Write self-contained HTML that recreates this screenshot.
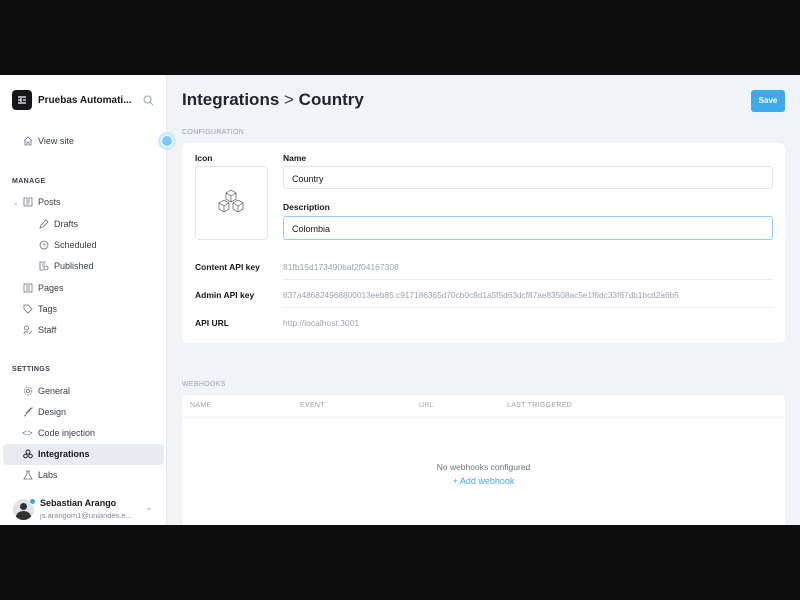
<!DOCTYPE html>
<html><head><style>
*{margin:0;padding:0;box-sizing:border-box}
body{width:800px;height:600px;background:#0c0c0c;font-family:"Liberation Sans",sans-serif;position:relative;overflow:hidden}
#app{position:absolute;left:0;top:75px;width:800px;height:450px;background:#f1f3f6;overflow:hidden}
.abs{position:absolute}
#side{position:absolute;left:0;top:0;width:167px;height:450px;background:#fff;border-right:1px solid #e5e8ec}
.nav{position:absolute;font-size:9px;color:#394047;white-space:nowrap}
.ic{position:absolute;width:10px;height:10px}
.sec{position:absolute;left:12px;font-size:7px;font-weight:bold;color:#394047;letter-spacing:.4px}
.lbl{position:absolute;font-size:8.5px;font-weight:bold;color:#15171a}
.val{position:absolute;font-size:8px;color:#99a3ad}
.th{position:absolute;top:327px;font-size:7px;color:#99a3ad;letter-spacing:.3px}
</style></head><body>
<div id="app">
<div id="side">
  <div class="abs" style="left:12px;top:15px;width:20px;height:20px;background:#15171a;border-radius:4px"></div>
  <svg class="abs" style="left:16px;top:19px" width="12" height="12" viewBox="0 0 12 12" stroke="#fff" stroke-width="1.2"><path d="M2 3h8M2 6h3M7 6h3M2 9h8M5 4v4"/></svg>
  <div class="nav" style="left:38px;top:20px;font-weight:bold;color:#15171a;font-size:10px">Pruebas Automati...</div>
  <svg class="abs" style="left:143px;top:20px" width="11" height="11" viewBox="0 0 11 11" fill="none" stroke="#99a3ad"><circle cx="4.5" cy="4.5" r="3.5"/><path d="M7 7l3 3"/></svg>
  <svg class="ic" style="left:23px;top:61px" viewBox="0 0 10 10" fill="none" stroke="#6a737c" stroke-width=".8"><path d="M1 5L5 1l4 4M2 4v5h2V6h2v3h2V4"/></svg>
  <div class="nav" style="left:38px;top:61px">View site</div>
  <div class="sec" style="top:103px">MANAGE</div>
  <div class="nav" style="left:12px;top:122px;color:#aab">⌄</div>
  <svg class="ic" style="left:23px;top:122px" viewBox="0 0 10 10" fill="none" stroke="#6a737c" stroke-width=".8"><rect x="1" y="1" width="8" height="8"/><path d="M3 3h4M3 5h4M3 7h3"/></svg>
  <div class="nav" style="left:38px;top:122px">Posts</div>
  <svg class="ic" style="left:39px;top:144px" viewBox="0 0 10 10" fill="none" stroke="#6a737c" stroke-width=".8"><path d="M1 9l1-3 5-5 2 2-5 5z"/></svg>
  <div class="nav" style="left:54px;top:144px">Drafts</div>
  <svg class="ic" style="left:39px;top:165px" viewBox="0 0 10 10" fill="none" stroke="#6a737c" stroke-width=".8"><circle cx="5" cy="5" r="4"/><path d="M5 2.5V5h2"/></svg>
  <div class="nav" style="left:54px;top:165px">Scheduled</div>
  <svg class="ic" style="left:39px;top:186px" viewBox="0 0 10 10" fill="none" stroke="#6a737c" stroke-width=".8"><path d="M7 1H1v8h4M3 3h3M3 5h2"/><circle cx="7" cy="7" r="2"/></svg>
  <div class="nav" style="left:54px;top:186px">Published</div>
  <svg class="ic" style="left:23px;top:208px" viewBox="0 0 10 10" fill="none" stroke="#6a737c" stroke-width=".8"><rect x="1" y="1" width="8" height="8"/><path d="M3 3h4M3 5h4M3 7h4"/></svg>
  <div class="nav" style="left:38px;top:208px">Pages</div>
  <svg class="ic" style="left:23px;top:229px" viewBox="0 0 10 10" fill="none" stroke="#6a737c" stroke-width=".8"><path d="M1 1h4l4 4-4 4-4-4z"/></svg>
  <div class="nav" style="left:38px;top:229px">Tags</div>
  <svg class="ic" style="left:23px;top:250px" viewBox="0 0 10 10" fill="none" stroke="#6a737c" stroke-width=".8"><circle cx="3.5" cy="3" r="2"/><path d="M1 9c0-3 4-3 4-1M6 9l3-3"/></svg>
  <div class="nav" style="left:38px;top:250px">Staff</div>
  <div class="sec" style="top:291px">SETTINGS</div>
  <svg class="ic" style="left:23px;top:311px" viewBox="0 0 10 10" fill="none" stroke="#6a737c" stroke-width=".8"><circle cx="5" cy="5" r="1.6"/><circle cx="5" cy="5" r="3.8" stroke-dasharray="1.5 1"/></svg>
  <div class="nav" style="left:38px;top:311px">General</div>
  <svg class="ic" style="left:23px;top:332px" viewBox="0 0 10 10" fill="none" stroke="#6a737c" stroke-width=".8"><path d="M1 9c2 0 2-2 3-3l5-5-1-0-5 5"/></svg>
  <div class="nav" style="left:38px;top:332px">Design</div>
  <div class="nav" style="left:22px;top:353px;color:#6a737c">&lt;&gt;</div>
  <div class="nav" style="left:38px;top:353px">Code injection</div>
  <div class="abs" style="left:3px;top:369px;width:161px;height:21px;background:#e8ebef;border-radius:4px"></div>
  <svg class="ic" style="left:23px;top:374px" viewBox="0 0 10 10" fill="none" stroke="#15171a" stroke-width=".9"><circle cx="5" cy="3" r="2"/><circle cx="2.5" cy="7" r="1.8"/><circle cx="7.5" cy="7" r="1.8"/></svg>
  <div class="nav" style="left:38px;top:374px;font-weight:bold;color:#15171a">Integrations</div>
  <svg class="ic" style="left:23px;top:395px" viewBox="0 0 10 10" fill="none" stroke="#6a737c" stroke-width=".8"><path d="M3 1h4M4 1v3L1 9h8L6 4V1"/></svg>
  <div class="nav" style="left:38px;top:395px">Labs</div>
  <div class="abs" style="left:13px;top:424px;width:21px;height:21px;border-radius:50%;background:#dfe3e8;overflow:hidden"><div class="abs" style="left:7px;top:4px;width:7px;height:7px;border-radius:50%;background:#333"></div><div class="abs" style="left:3px;top:12px;width:15px;height:12px;border-radius:50%;background:#333"></div></div>
  <div class="abs" style="left:29px;top:423px;width:7px;height:7px;border-radius:50%;background:#30a4ec;border:1px solid #fff"></div>
  <div class="nav" style="left:40px;top:423px;font-weight:bold;color:#15171a">Sebastian Arango</div>
  <div class="nav" style="left:40px;top:436px;font-size:7.5px;color:#7c8b9a">js.arangom1@uniandes.e...</div>
  <div class="nav" style="left:145px;top:427px;color:#99a3ad">⌄</div>
</div>
<div class="abs" style="left:158px;top:57px;width:18px;height:18px;border-radius:50%;background:#cde9fb"></div>
<div class="abs" style="left:161px;top:60px;width:12px;height:12px;border-radius:50%;background:#7ec8f5;border:1px solid #fff"></div>

<div class="abs" style="left:182px;top:15px;font-size:17px;font-weight:bold;color:#22262b">Integrations <span style="font-weight:normal;color:#394047">&gt;</span> Country</div>
<div class="abs" style="left:751px;top:15px;width:34px;height:22px;background:#3eaaea;border-radius:3px;color:#fff;font-size:8px;font-weight:bold;text-align:center;line-height:22px">Save</div>
<div class="abs" style="left:182px;top:54px;font-size:7px;color:#99a3ad;letter-spacing:.3px">CONFIGURATION</div>
<div class="abs" style="left:182px;top:68px;width:603px;height:200px;background:#fff;border-radius:6px"></div>
<div class="lbl" style="left:195px;top:78px">Icon</div>
<div class="abs" style="left:195px;top:91px;width:73px;height:74px;border:1px solid #e2e6ea;border-radius:4px"></div>
<svg class="abs" style="left:216px;top:113px" width="30" height="30" viewBox="0 0 30 30" fill="none" stroke="#555" stroke-width=".7"><path d="M10 5l5-3 5 3v6l-5 3-5-3zM10 5l5 3 5-3M15 8v6M3 15l5-3 5 3v6l-5 3-5-3zM3 15l5 3 5-3M8 18v6M17 15l5-3 5 3v6l-5 3-5-3zM17 15l5 3 5-3M22 18v6"/></svg>
<div class="lbl" style="left:283px;top:78px">Name</div>
<div class="abs" style="left:283px;top:91px;width:490px;height:23px;border:1px solid #e2e6ea;border-radius:3px;font-size:9px;color:#15171a;padding:7px 8px">Country</div>
<div class="lbl" style="left:283px;top:127px">Description</div>
<div class="abs" style="left:283px;top:141px;width:490px;height:24px;border:1.5px solid #8fd0f5;border-radius:3px;font-size:9px;color:#15171a;padding:7px 8px">Colombia</div>
<div class="lbl" style="left:195px;top:187px">Content API key</div>
<div class="val" style="left:283px;top:187px;font-size:8.5px">81fb15d173490baf2f04167308</div>
<div class="abs" style="left:283px;top:204px;width:490px;height:1px;background:#eef0f3"></div>
<div class="lbl" style="left:195px;top:215px">Admin API key</div>
<div class="val" style="left:283px;top:215px;font-size:8.3px">637a486824968800013eeb85:c917186365d70cb0c8d1a5f5d63dcf87ae83508ac5e1f6dc33f67db1bcd2a6b5</div>
<div class="abs" style="left:283px;top:232px;width:490px;height:1px;background:#eef0f3"></div>
<div class="lbl" style="left:195px;top:243px">API URL</div>
<div class="val" style="left:283px;top:243px;font-size:8.5px">http://localhost:3001</div>

<div class="abs" style="left:182px;top:306px;font-size:7px;color:#99a3ad;letter-spacing:.3px">WEBHOOKS</div>
<div class="abs" style="left:182px;top:320px;width:603px;height:140px;background:#fff;border-radius:5px"></div>
<div class="th" style="left:190px">NAME</div>
<div class="th" style="left:300px">EVENT</div>
<div class="th" style="left:419px">URL</div>
<div class="th" style="left:507px">LAST TRIGGERED</div>
<div class="abs" style="left:182px;top:342px;width:603px;height:1px;background:#eef0f3"></div>
<div class="abs" style="left:182px;top:387px;width:603px;text-align:center;font-size:8.5px;color:#6a737c">No webhooks configured</div>
<div class="abs" style="left:182px;top:401px;width:603px;text-align:center;font-size:9px;color:#3eaaea">+ Add webhook</div>
</div>
</body></html>
